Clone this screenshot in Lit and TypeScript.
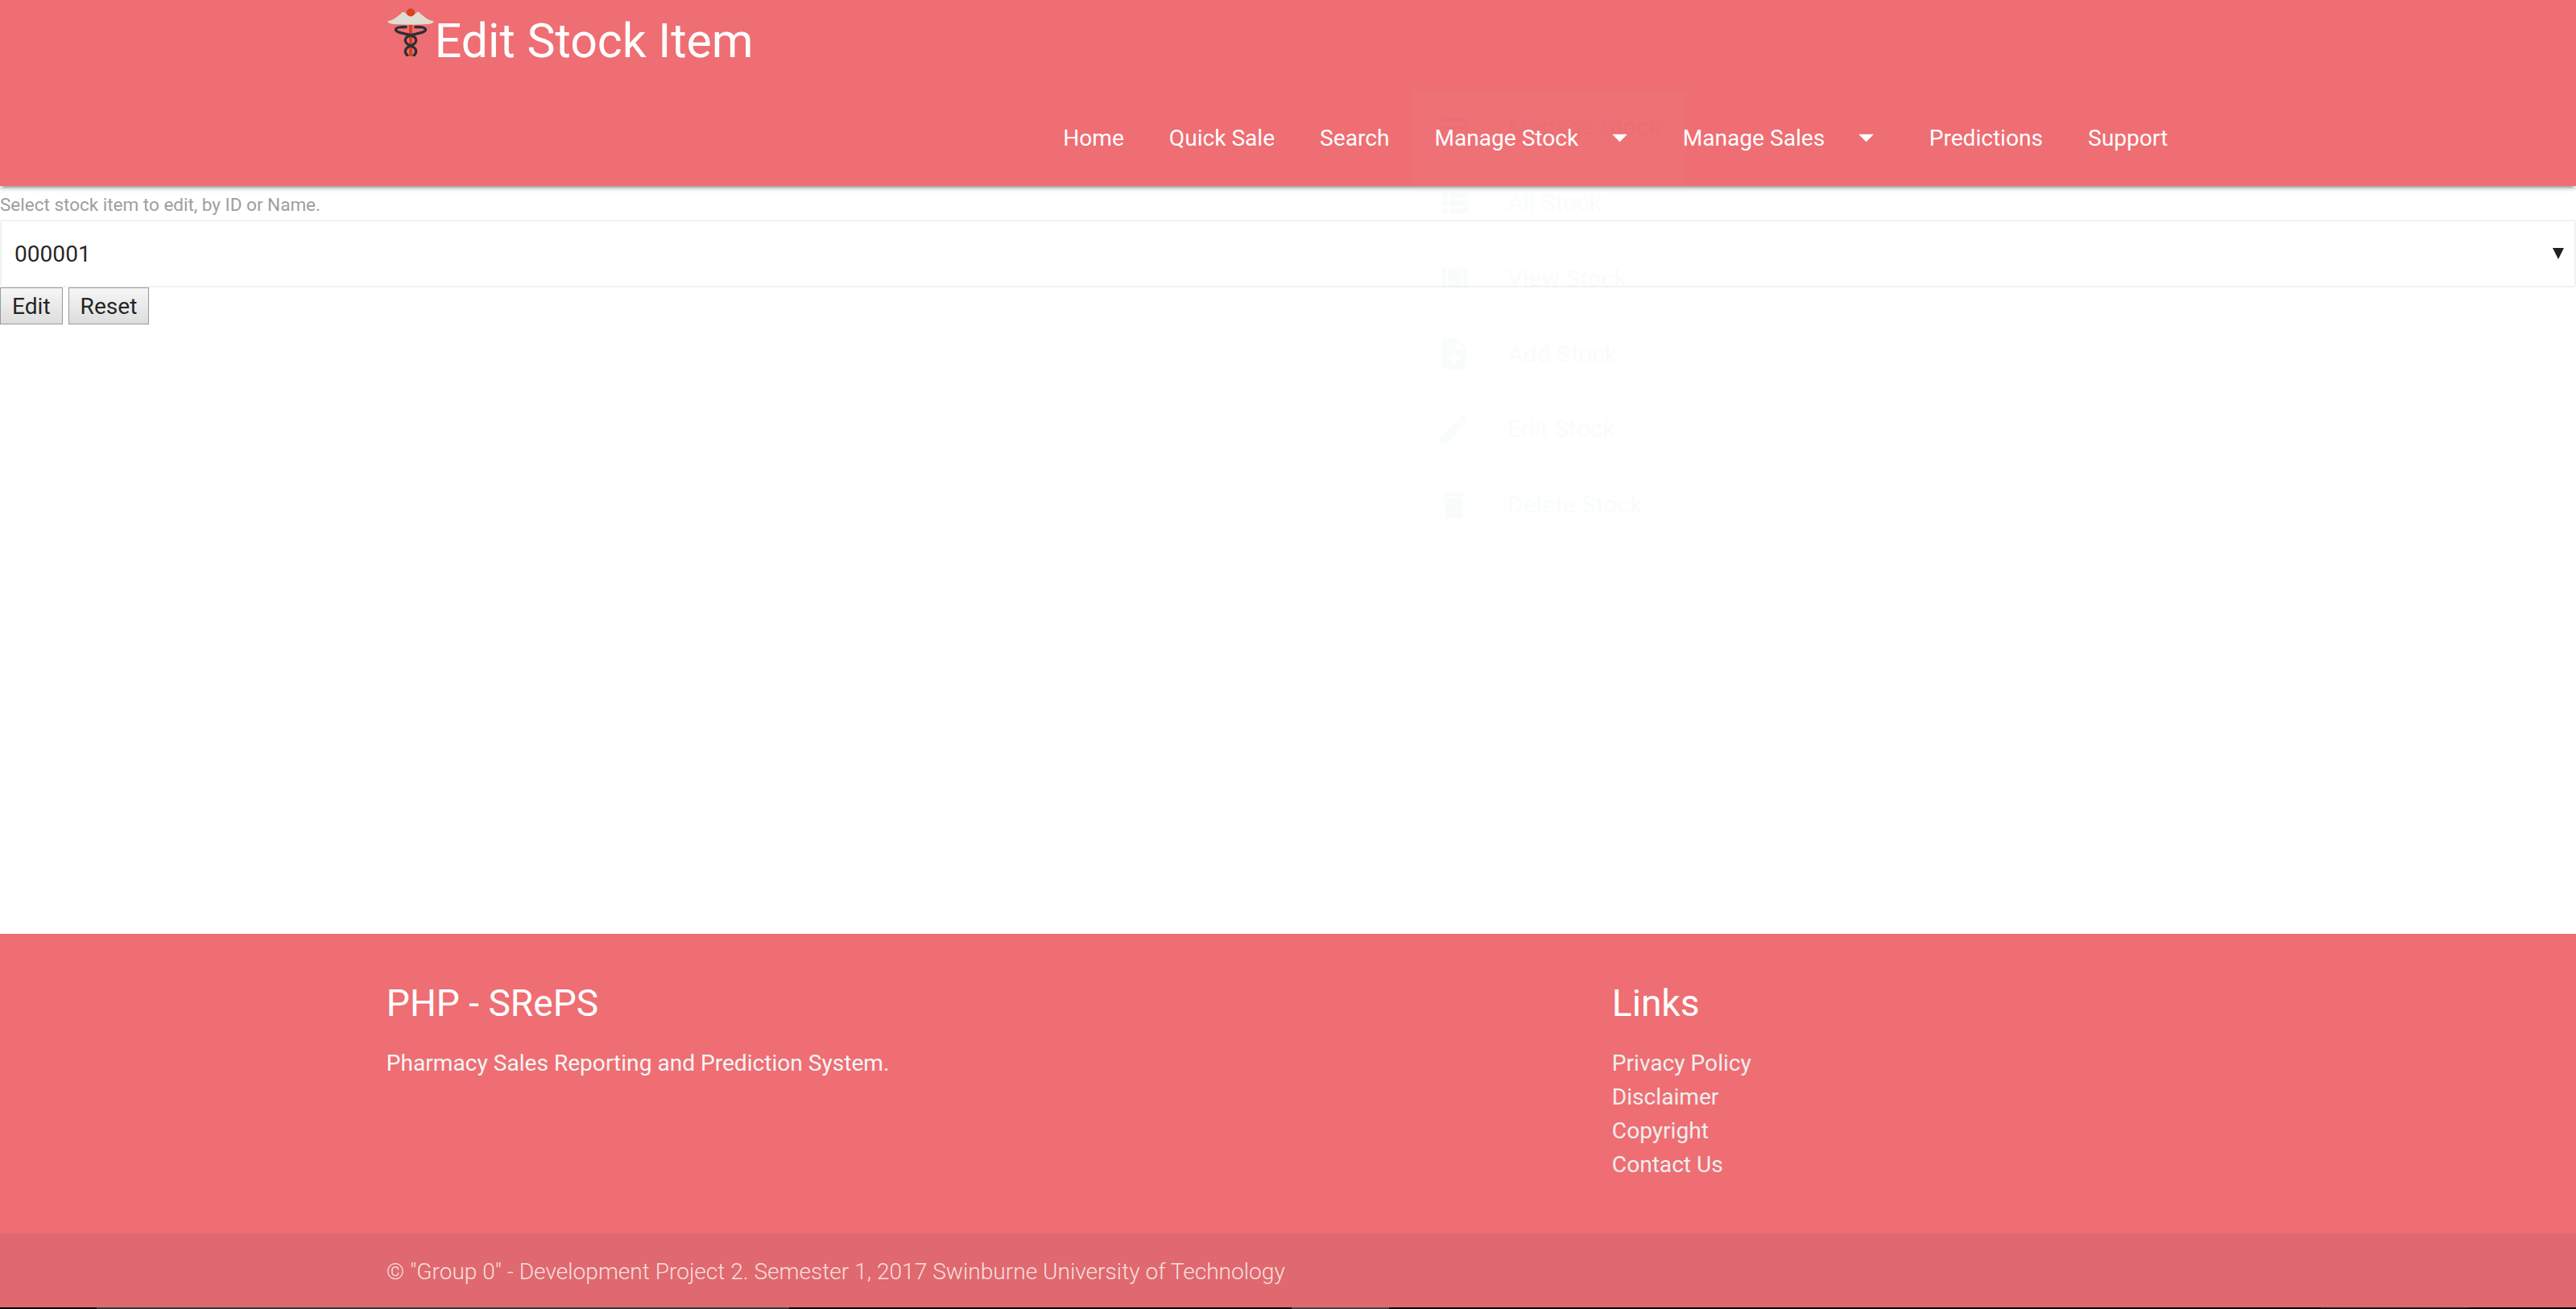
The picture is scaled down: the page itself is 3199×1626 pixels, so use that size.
import { LitElement, html, css, svg } from "lit";
import { customElement } from "lit/decorators.js";

const menu = [
  { label: "Manage Stock", icon: svg`<path d="M3 18h18v-2H3v2zm0-5h18v-2H3v2zm0-7v2h18V6H3z"/>` },
  { label: "All Stock", icon: svg`<path d="M4 14h4v-4H4v4zm0 5h4v-4H4v4zM4 9h4V5H4v4zm5 5h12v-4H9v4zm0 5h12v-4H9v4zM9 5v4h12V5H9z"/>` },
  { label: "View Stock", icon: svg`<path d="M4 18h3V5H4v13zM18 5v13h3V5h-3zM8 18h9V5H8v13z"/>` },
  { label: "Add Stock", icon: svg`<path d="M14 2H6c-1.1 0-1.99.9-1.99 2L4 20c0 1.1.89 2 1.99 2H18c1.1 0 2-.9 2-2V8l-6-6zm2 14h-3v3h-2v-3H8v-2h3v-3h2v3h3v2zm-3-7V3.5L18.5 9H13z"/>` },
  { label: "Edit Stock", icon: svg`<path d="M3 17.25V21h3.75L17.81 9.94l-3.75-3.75L3 17.25zM20.71 7.04c.39-.39.39-1.02 0-1.41l-2.34-2.34c-.39-.39-1.02-.39-1.41 0l-1.83 1.83 3.75 3.75 1.83-1.83z"/>` },
  { label: "Delete Stock", icon: svg`<path d="M6 19c0 1.1.9 2 2 2h8c1.1 0 2-.9 2-2V7H6v12zM19 4h-3.5l-1-1h-5l-1 1H5v2h14V4z"/>` },
];

@customElement("app-root")
export class AppRoot extends LitElement {
  static styles = css`
    :host { display: flex; flex-direction: column; height: 1626px; position: relative; overflow: hidden;
      font-family: Roboto, sans-serif; font-size: 28.1px; line-height: 42px; color: rgba(0,0,0,.87); background: #fff; }
    * { box-sizing: border-box; }
    .container { width: 70%; margin: 0 auto; }
    header { height: 231px; flex: none; background: #ee6e73; color: #fff;
      box-shadow: 0 3.75px 3.75px 0 rgba(0,0,0,.14), 0 1.9px 9.4px 0 rgba(0,0,0,.12), 0 5.6px 1.9px -3.75px rgba(0,0,0,.2); }
    .brand { display: flex; height: 112px; font-size: 59px; line-height: 102px; }
    .brand svg { width: 60px; height: 60px; margin-top: 10px; flex: none; }
    nav { display: flex; justify-content: flex-end; line-height: 119px; margin-right: -1px; }
    nav a { padding: 0 28px; white-space: nowrap; display: flex; }
    nav svg { width: 45px; height: 45px; margin: 36px 0 0 28.500px; fill: #fff; }
    .hint { margin: 8px 0 0; padding-bottom: 4px; font-size: 22.5px; line-height: 30px; color: #9e9e9e; }
    main { flex: 1; }
    .select { height: 84px; border: 2px solid #f2f2f2; border-radius: 4px; display: flex; align-items: center;
      justify-content: space-between; padding: 1px 13px 0 16px; }
    .select svg { width: 14px; height: 14px; margin-top: -1px; fill: #212121; }
    .buttons { display: flex; gap: 7px; }
    button { height: 46px; border: 1px solid #999; background: linear-gradient(#f6f6f6, #ddd); padding: 1px 14px 0;
      margin: 0; font: 28.1px/42px Roboto, sans-serif; color: rgba(0,0,0,.87); border-radius: 0; }
    footer { flex: none; background: #ee6e73; color: #fff; height: 466px; display: flex; flex-direction: column; }
    .cols { display: flex; height: 372px; padding-top: 58px; flex: none; }
    .about { width: 1522px; }
    h5 { margin: 0; font-size: 46.1px; line-height: 57px; font-weight: 400; }
    .about p { margin: 25px 0 0; color: #f5f5f5; }
    .links ul { margin: 25px 0 0; padding: 0; list-style: none; color: #eee; }
    .copy { height: 92px; background: #df696e; color: rgba(255,255,255,.8); font-weight: 300; line-height: 95px; }
    .strip { height: 2px; background: linear-gradient(90deg, #000 120px, #36383a 120px 980px, #000 980px 1604px,
      #444 1604px 1725px, #000 1725px 2882px, #151515 2882px 3066px, #000 3066px); }
    .dropdown { position: absolute; left: 1753px; top: 111.500px; width: 341px; opacity: .025;
      background: #fff; color: #26a69a; font-size: 30px; }
    .item { height: 93.75px; display: flex; align-items: center; padding-left: 30px; }
    .item svg { width: 45px; height: 45px; fill: #26a69a; margin-right: 44px; }
  `;

  render() {
    return html`
      <header>
        <div class="container">
          <div class="brand">
            <svg viewBox="0 0 60 60">
              <rect x="28" y="16" width="4" height="44" rx="2" fill="#d8401f"/>
              <path d="M1.200 16.500C11 14.500 16 8 20.500 4.800Q22 4.500 24 7Q27 10 30 10Q33 10 36 7Q38 4.500 39.500 4.800C44 8 49 14.500 58.800 16.500Q58 19.500 51 20Q30 21.500 9 20Q2 19.500 1.200 16.500Z" fill="#e0dcd2"/>
              <circle cx="30" cy="5.500" r="5" fill="#d8401f"/>
              <path d="M25.500 23.600C17 23.200 11.500 24 11.500 26.800C11.500 30.500 22 31.500 30 33.800C39 36.500 39 43 30 46.800C22 50 21.500 55.500 27 60M34.500 23.600C43 23.200 48.500 24 48.500 26.800C48.500 30.500 38 31.500 30 33.800C21 36.500 21 43 30 46.800C38 50 38.500 55.500 33 60" fill="none" stroke="#2b3036" stroke-width="3.300"/>
            </svg>
            <span>Edit Stock Item</span>
          </div>
          <nav>
            <a>Home</a><a>Quick Sale</a><a>Search</a>
            <a>Manage Stock<svg viewBox="0 0 24 24"><path d="M7 10l5 5 5-5z"/></svg></a>
            <a>Manage Sales<svg viewBox="0 0 24 24"><path d="M7 10l5 5 5-5z"/></svg></a>
            <a>Predictions</a><a>Support</a>
          </nav>
        </div>
      </header>
      <main>
        <p class="hint">Select stock item to edit, by ID or Name.</p>
        <div class="select"><span>000001</span><svg viewBox="0 0 14 14"><path d="M0 0H14L7 14Z"/></svg></div>
        <div class="buttons"><button>Edit</button><button>Reset</button></div>
      </main>
      <footer>
        <div class="container cols">
          <div class="about"><h5>PHP - SRePS</h5><p>Pharmacy Sales Reporting and Prediction System.</p></div>
          <div class="links"><h5>Links</h5>
            <ul><li>Privacy Policy</li><li>Disclaimer</li><li>Copyright</li><li>Contact Us</li></ul></div>
        </div>
        <div class="copy"><div class="container">© "Group 0" - Development Project 2. Semester 1, 2017 Swinburne University of Technology</div></div>
        <div class="strip"></div>
      </footer>
      <div class="dropdown">
        ${menu.map((m) => html`<div class="item"><svg viewBox="0 0 24 24">${m.icon}</svg><span>${m.label}</span></div>`)}
      </div>
    `;
  }
}
